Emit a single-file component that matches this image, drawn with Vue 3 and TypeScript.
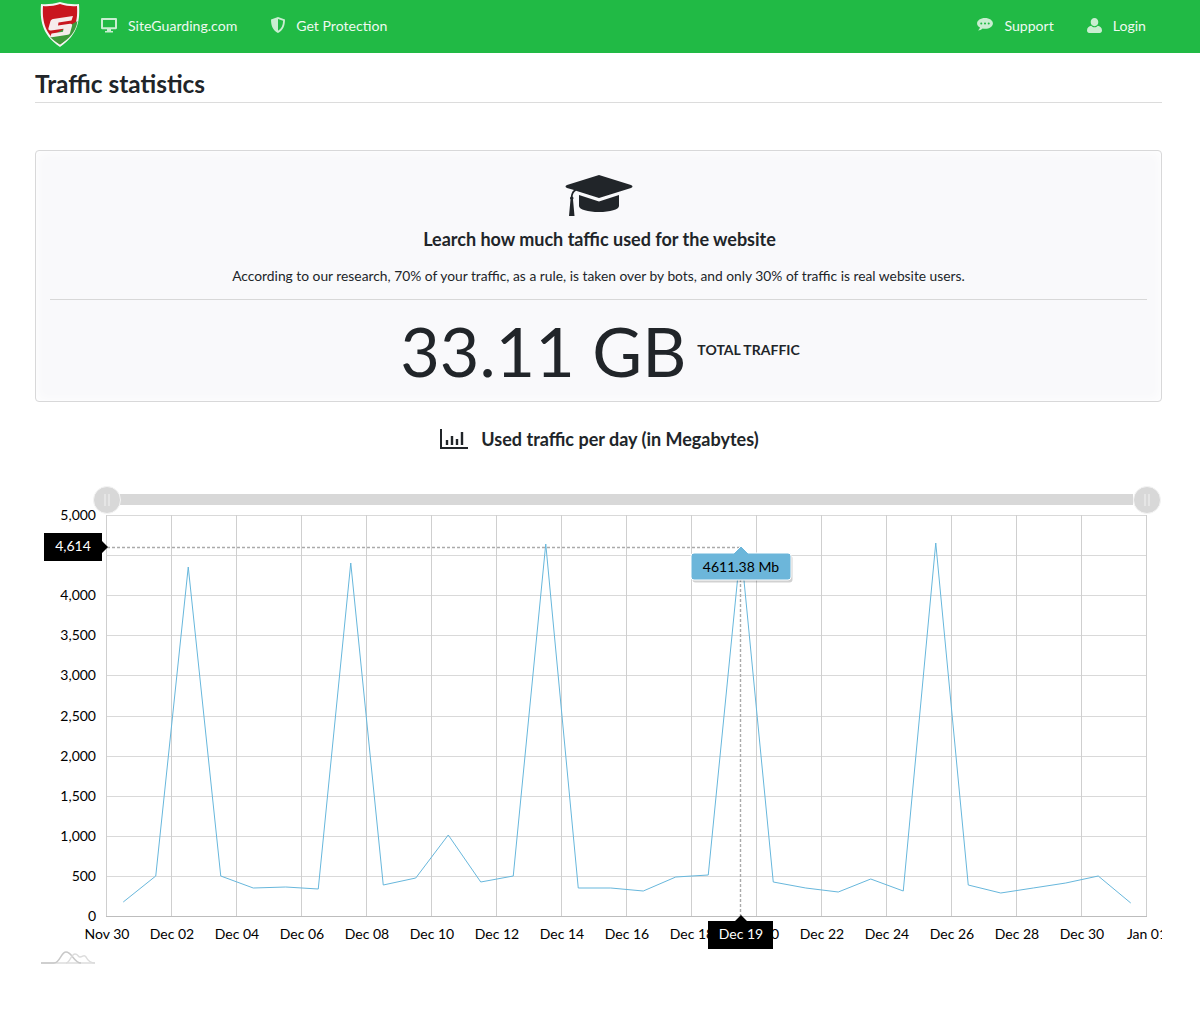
<template>
  <div class="page">
    <nav class="topbar">
      <div class="nav-left">
        <svg class="logo" viewBox="0 0 40 46" width="40" height="46">
          <path d="M20 1 C27 3 33 3.500 39 3 C40 18 39 33 20 46 C1 33 0 18 1 3 C7 3.500 13 3 20 1 Z" fill="#f4f7f4" />
          <path d="M20 3 C26 5 32 5.500 37 5 C37.800 18 36.500 32 20 43.500 C3.500 32 2.200 18 3 5 C8 5.500 14 5 20 3 Z" fill="#c9161f" />
          <path d="M37.500 20 C36 31 29 38 20 43.500 C16 41 13 39 10 36 Z" fill="#3f9a3a" />
          <path d="M13 18 L33 15 L31.500 19.500 L18.500 21.500 L18 24.500 L30 22.700 C32 22.500 32.500 23.500 32 25 L30 32 C29.700 33 29 33.500 28 33.700 L10 36.500 L11.500 32.400 L23 30.700 L23.500 27.700 L11 29.500 C9 29.800 8 28.700 8.500 27 L10.500 20 C11 18.800 12 18.300 13 18 Z" fill="#f6ecec" />
        </svg>
        <a class="nav-item site-link">
          <svg class="nav-icon" viewBox="0 0 16 15" width="16" height="15">
            <path fill-rule="evenodd" d="M1.200 0 H14.800 C15.500 0 16 .5 16 1.200 V10 C16 10.700 15.500 11.200 14.800 11.200 H1.200 C.5 11.200 0 10.700 0 10 V1.200 C0 .5 .5 0 1.200 0 Z M2 2 V9.200 H14 V2 Z M6 11.200 H10 V13 H12 V14.500 H4 V13 H6 Z" />
          </svg>
          SiteGuarding.com
        </a>
        <a class="nav-item">
          <svg class="nav-icon" viewBox="0 0 14 16" width="14" height="16">
            <path fill-rule="evenodd" d="M7 0 L14 2.500 C14 9 12 13.500 7 16 C2 13.500 0 9 0 2.500 Z M7 2 V13.800 C10.500 11.800 12 8.500 12.100 3.800 Z" />
          </svg>
          Get Protection
        </a>
      </div>
      <div class="nav-right">
        <a class="nav-item">
          <svg class="nav-icon" viewBox="0 0 17 15" width="16" height="14">
            <path fill-rule="evenodd" d="M8.500 0 C13.200 0 17 2.600 17 5.800 C17 9 13.200 11.600 8.500 11.600 C7.600 11.600 6.800 11.500 6 11.300 C4.800 12.600 3 13.400 1 13.500 C2.200 12.500 2.900 11.300 3 10 C1.200 9 0 7.500 0 5.800 C0 2.600 3.800 0 8.500 0 Z M4.500 4.700 A1.100 1.100 0 1 0 4.500 6.900 A1.100 1.100 0 1 0 4.500 4.700 Z M8.500 4.700 A1.100 1.100 0 1 0 8.500 6.900 A1.100 1.100 0 1 0 8.500 4.700 Z M12.500 4.700 A1.100 1.100 0 1 0 12.500 6.900 A1.100 1.100 0 1 0 12.500 4.700 Z" />
          </svg>
          Support
        </a>
        <a class="nav-item">
          <svg class="nav-icon" viewBox="0 0 15 15" width="15" height="15">
            <path d="M7.500 0 C9.800 0 11.300 1.700 11.300 4 C11.300 6.300 9.800 8.200 7.500 8.200 C5.200 8.200 3.700 6.300 3.700 4 C3.700 1.700 5.200 0 7.500 0 Z M4.300 7.800 C5.200 8.800 6.300 9.300 7.500 9.300 C8.700 9.300 9.800 8.800 10.700 7.800 C13 8.200 15 9.600 15 12.500 C15 14 14 15 12.800 15 H2.200 C1 15 0 14 0 12.500 C0 9.600 2 8.200 4.300 7.800 Z" />
          </svg>
          Login
        </a>
      </div>
    </nav>

    <main class="content">
      <h1 class="title">Traffic statistics</h1>

      <section class="summary">
        <svg class="cap" viewBox="0 0 68 42" width="68" height="42">
          <path d="M34 0 L66 10 C68 10.700 68 12.300 66 13 L34 23 L11 15.800 C8.500 17.500 7.800 19.500 7.600 21.500 C8.700 22.200 8.800 23.800 8 24.600 L9.500 41 H4 L5.500 24.600 C4.700 23.800 4.800 22.200 5.900 21.500 C6.100 19 6.900 16.500 9 15 L2 13 C0 12.300 0 10.700 2 10 Z" />
          <path d="M14 20 L34 26.500 L54 20 V31 C54 34.500 45 37 34 37 C23 37 14 34.500 14 31 Z" />
        </svg>
        <h3 class="summary-head">Learch how much taffic used for the website</h3>
        <p class="summary-text">According to our research, 70% of your traffic, as a rule, is taken over by bots, and only 30% of traffic is real website users.</p>
        <div class="statistic">
          <span class="stat-value">33.11 GB</span>
          <span class="stat-label">TOTAL TRAFFIC</span>
        </div>
      </section>

      <h3 class="chart-head">
        <svg viewBox="0 0 28 20" width="28" height="20">
          <path d="M1 0 V19 H28" fill="none" stroke="#212529" stroke-width="2" />
          <path d="M7 11 V16 M12 7 V16 M17 10 V16 M22 3 V16" fill="none" stroke="#212529" stroke-width="2.400" />
        </svg>
        Used traffic per day (in Megabytes)
      </h3>

      <svg class="chart" viewBox="35 480 1127 500" width="1127" height="500">
        <rect x="120" y="494" width="1013" height="11" fill="#d8d8d8" />
        <g v-for="x in [107, 1147]" :key="x">
          <circle :cx="x" cy="500" r="13.500" fill="#d8d8d8" stroke="#f4f4f4" stroke-width="1" />
          <path :d="`M${x - 2} 494 V506 M${x + 2} 494 V506`" stroke="#f2f2f2" stroke-width="1" />
        </g>

        <g stroke="#d9d9d9" stroke-width="1">
          <line v-for="t in yTicks" :key="t.label" x1="106" x2="1147" :y1="t.y" :y2="t.y" />
        </g>
        <g stroke="#cfcfcf" stroke-width="1">
          <line v-for="t in xTicks" :key="t.label" :x1="t.x" :x2="t.x" y1="515" y2="916" />
        </g>
        <line x1="106" x2="1147" y1="916.500" y2="916.500" stroke="#bdbdbd" />

        <template v-for="t in yTicks" :key="t.label">
          <text v-if="t.label !== '4,500'" class="axis" x="96" :y="t.y + 4" text-anchor="end">{{ t.label }}</text>
        </template>
        <text v-for="t in xTicks" :key="t.label" class="axis" :x="t.x + 0.5" y="939" text-anchor="middle">{{ t.label }}</text>

        <polyline :points="linePoints" fill="none" stroke="#67b7dc" stroke-width="1" />

        <path d="M107 547.500 H740.500 V916" fill="none" stroke="#aaa" stroke-width="1.400" stroke-dasharray="3 2" />

        <path d="M44 533 H102 V541 L108 547 L102 553 V561 H44 Z" fill="#000" />
        <text class="axis tag" x="73" y="551" text-anchor="middle">4,614</text>

        <path d="M708 921 H735 L741 915 L747 921 H773 V949 H708 Z" fill="#000" />
        <text class="axis tag" x="741" y="939" text-anchor="middle">Dec 19</text>

        <path d="M694 554 H734 L741 547 L748 554 H788 Q791 554 791 557 V578 Q791 581 788 581 H694 Q691 581 691 578 V557 Q691 554 694 554 Z" fill="#000" fill-opacity=".18" transform="translate(1.500 1.500)" />
        <path d="M694 553 H734 L741 546 L748 553 H788 Q791 553 791 556 V577 Q791 580 788 580 H694 Q691 580 691 577 V556 Q691 553 694 553 Z" fill="#6cb6da" stroke="#fff" stroke-width="1" />
        <text class="axis" x="741" y="572" text-anchor="middle">4611.38 Mb</text>

        <g fill="none" stroke-width="1.500">
          <path d="M41 963 H95" stroke="#dcdcdc" />
          <path d="M41 963 H54 C60 963 61 952 66 952 C72 952 74 963 81 963" stroke="#c8c8c8" />
          <path d="M66 963 C70 963 71 954 75 954 C78 954 78 957 80 957 C83 957 84 954 86 957 C88 961 90 963 95 963" stroke="#dcdcdc" />
        </g>
      </svg>
    </main>
  </div>
</template>

<script setup lang="ts">
import { computed } from "vue";

// Screen positions of the daily readings, read off the plot area
const readings = [
  902, 876, 567, 876, 888, 887, 889, 563, 885, 878, 835, 882, 876, 544, 888, 888,
  891, 877, 875, 547, 882, 888, 892, 879, 891, 543, 885, 893, 888, 883, 876, 903,
];

const yTicks = [
  "0", "500", "1,000", "1,500", "2,000", "2,500", "3,000", "3,500", "4,000", "4,500", "5,000",
].map((label, i) => ({ label, y: Math.round(916 - i * 40.1) + 0.5 }));

const xLabels = [
  "Nov 30", "Dec 02", "Dec 04", "Dec 06", "Dec 08", "Dec 10", "Dec 12", "Dec 14", "Dec 16",
  "Dec 18", "Dec 20", "Dec 22", "Dec 24", "Dec 26", "Dec 28", "Dec 30", "Jan 01",
];
const xTicks = xLabels.map((label, i) => ({ label, x: 106.500 + i * 65 }));

const linePoints = computed(() =>
  readings.map((y, i) => `${123.250 + i * 32.5},${y}`).join(" ")
);
</script>

<style>
body {
  background: #fff;
}
</style>

<style scoped>
.page {
  font-family: Lato, "Liberation Sans", sans-serif;
  color: #212529;
  min-height: 1015px;
}
.topbar {
  height: 53px;
  background: #21ba45;
  display: flex;
  justify-content: space-between;
  padding: 0 54px 0 40px;
  box-sizing: border-box;
  overflow: hidden;
}
.nav-left,
.nav-right {
  display: flex;
  align-items: center;
  height: 53px;
}
.logo {
  margin: 1px 21px 0 0;
  flex: none;
  align-self: flex-start;
}
.nav-item {
  display: flex;
  align-items: center;
  gap: 11px;
  color: #eef9f0;
  font-size: 14.100px;
  margin: 0 33px 3px 0;
}
.site-link {
  margin-right: 34px;
}
.nav-right .nav-item:last-child {
  margin-right: 0;
}
.nav-icon {
  fill: #c9eed1;
  flex: none;
}
.content {
  padding: 0 38px 0 35px;
}
.title {
  margin: 0;
  padding: 14px 0 3px;
  height: 50px;
  box-sizing: border-box;
  font-size: 24.400px;
  line-height: 33px;
  font-weight: 700;
  border-bottom: 1px solid #dcdcdc;
}
.summary {
  margin-top: 47px;
  height: 252px;
  box-sizing: border-box;
  background: #f9f9fb;
  border: 1px solid #d8d8d9;
  border-radius: 4px;
  box-shadow: inset 0 0 12px #fff;
  padding: 24px 14px 0;
  display: flex;
  flex-direction: column;
  align-items: center;
}
.cap {
  fill: #212529;
  flex: none;
}
.summary-head {
  margin: 10px 0 0;
  padding-left: 2px;
  font-size: 18px;
  line-height: 24px;
  font-weight: 700;
}
.summary-text {
  margin: 15px 0 0;
  font-size: 13.800px;
  line-height: 20px;
  width: 100%;
  text-align: center;
  padding-bottom: 13px;
  border-bottom: 1px solid #d8d8d8;
}
.statistic {
  display: flex;
  align-items: center;
  justify-content: center;
  gap: 11px;
  margin-top: 9px;
  padding-left: 3px;
}
.stat-value {
  font-size: 68.300px;
  line-height: 84px;
}
.stat-label {
  font-size: 14px;
  font-weight: 700;
  margin-bottom: 3px;
}
.chart-head {
  margin: 24px 0 0;
  padding-left: 2px;
  display: flex;
  justify-content: center;
  align-items: center;
  gap: 13px;
  font-size: 18px;
  line-height: 26px;
  font-weight: 700;
}
.chart {
  display: block;
  margin-top: 28px;
}
.axis {
  font-size: 14px;
  fill: #000;
}
.tag {
  fill: #fff;
}
</style>
